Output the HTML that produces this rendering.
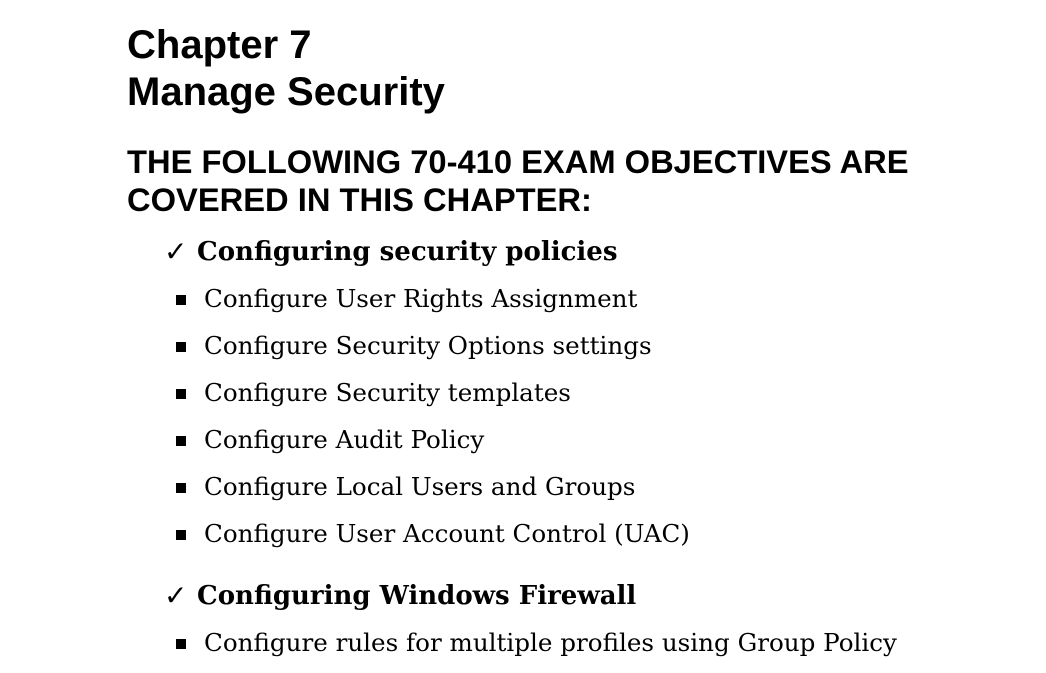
<!DOCTYPE html>
<html><head><meta charset="utf-8"><style>
body{margin:0;width:1046px;height:673px;background:#fff;position:relative;overflow:hidden;color:#000}
.a{position:absolute;white-space:nowrap;line-height:1}
.h{font-family:"Liberation Sans",sans-serif;font-weight:bold}
.s{font-family:"DejaVu Serif","Liberation Serif",serif;font-size:24.6px}
.b{font-weight:bold;font-size:26px}
.ck{font-family:"DejaVu Sans",sans-serif;font-size:28px}
.sq{position:absolute;width:10px;height:10px;background:#000}
</style></head><body>
<div class="a h" style="left:127px;top:25px;font-size:40px">Chapter 7</div>
<div class="a h" style="left:127px;top:72px;font-size:40px">Manage Security</div>
<div class="a h" style="left:127px;top:146px;font-size:32.7px">THE FOLLOWING 70-410 EXAM OBJECTIVES ARE</div>
<div class="a h" style="left:127px;top:184px;font-size:32.7px">COVERED IN THIS CHAPTER:</div>

<div class="a ck" style="left:164px;top:238px">✓</div>
<div class="a s b" style="left:197px;top:239px">Configuring security policies</div>
<div class="sq" style="left:176px;top:295px"></div><div class="a s" style="left:204px;top:287px">Configure User Rights Assignment</div>
<div class="sq" style="left:176px;top:342px"></div><div class="a s" style="left:204px;top:334px">Configure Security Options settings</div>
<div class="sq" style="left:176px;top:389px"></div><div class="a s" style="left:204px;top:381px">Configure Security templates</div>
<div class="sq" style="left:176px;top:436px"></div><div class="a s" style="left:204px;top:428px">Configure Audit Policy</div>
<div class="sq" style="left:176px;top:483px"></div><div class="a s" style="left:204px;top:475px">Configure Local Users and Groups</div>
<div class="sq" style="left:176px;top:530px"></div><div class="a s" style="left:204px;top:522px">Configure User Account Control (UAC)</div>

<div class="a ck" style="left:164px;top:582px">✓</div>
<div class="a s b" style="left:197px;top:583px">Configuring Windows Firewall</div>
<div class="sq" style="left:176px;top:639px"></div><div class="a s" style="left:204px;top:631px">Configure rules for multiple profiles using Group Policy</div>
</body></html>
